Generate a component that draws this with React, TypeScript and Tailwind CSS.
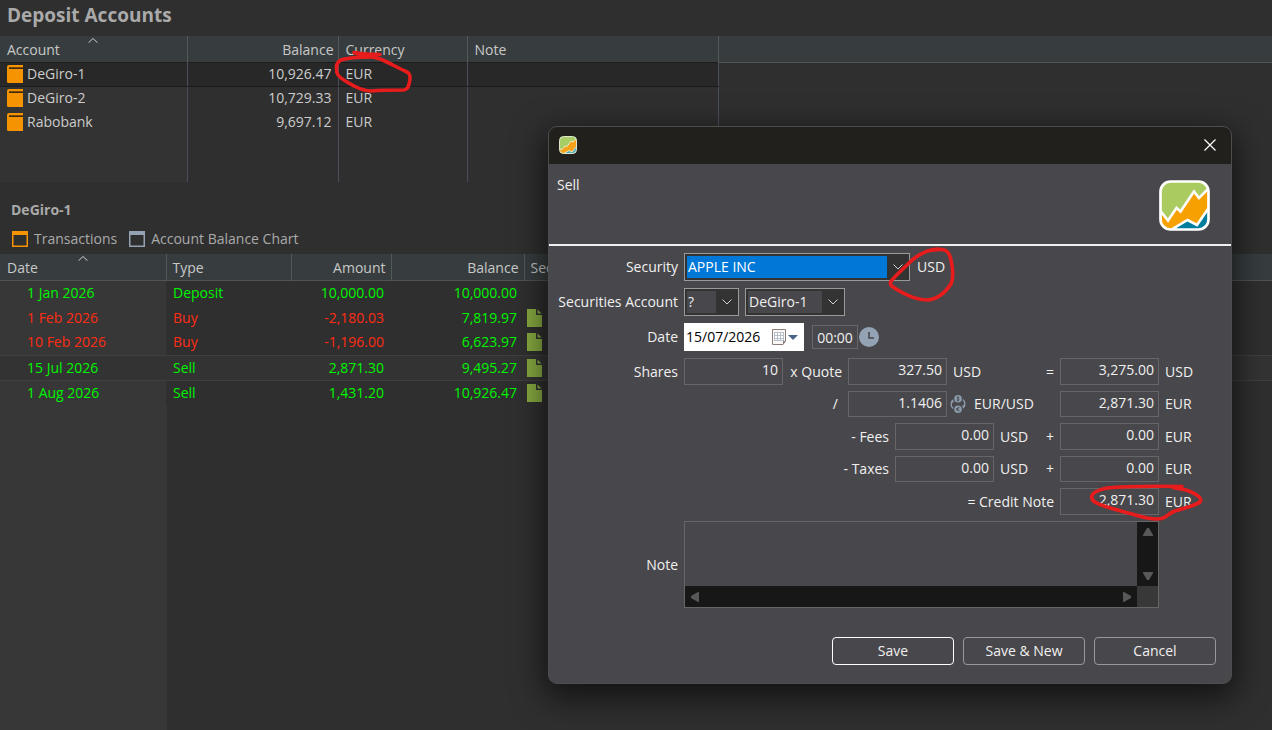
import { useState, type ReactNode } from 'react'

interface Account {
  name: string
  balance: string
  currency: string
}

interface Transaction {
  date: string
  type: string
  amount: string
  balance: string
  negative?: boolean
  hasSecurity?: boolean
}

const accounts: Account[] = [
  { name: 'DeGiro-1', balance: '10,926.47', currency: 'EUR' },
  { name: 'DeGiro-2', balance: '10,729.33', currency: 'EUR' },
  { name: 'Rabobank', balance: '9,697.12', currency: 'EUR' },
]

const transactions: Transaction[] = [
  { date: '1 Jan 2026', type: 'Deposit', amount: '10,000.00', balance: '10,000.00' },
  { date: '1 Feb 2026', type: 'Buy', amount: '-2,180.03', balance: '7,819.97', negative: true, hasSecurity: true },
  { date: '10 Feb 2026', type: 'Buy', amount: '-1,196.00', balance: '6,623.97', negative: true, hasSecurity: true },
  { date: '15 Jul 2026', type: 'Sell', amount: '2,871.30', balance: '9,495.27', hasSecurity: true },
  { date: '1 Aug 2026', type: 'Sell', amount: '1,431.20', balance: '10,926.47', hasSecurity: true },
]

function BookIcon() {
  return (
    <svg className="h-[18px] w-4 shrink-0" viewBox="0 0 16 18" aria-hidden="true">
      <path d="M2 0H16V18H1.5Q0 18 0 16.5V2Q0 0 2 0Z" fill="#f59300" />
      <path d="M2 2H16V4H2Z" fill="#7a4a00" />
      <path d="M2 3H16V4H2Z" fill="#3c2c14" />
    </svg>
  )
}

function DocumentIcon() {
  return (
    <svg className="h-[18px] w-[15px]" viewBox="0 0 15 18" aria-hidden="true">
      <path d="M0 0H9V6H15V18H0Z" fill="#86ab40" />
      <path d="M10.500 0.500L14.500 4.500H10.500Z" fill="#86ab40" />
    </svg>
  )
}

function ViewIcon({ color }: { color: string }) {
  return (
    <svg className="h-4 w-4" viewBox="0 0 16 16" aria-hidden="true">
      <rect x="0.750" y="0.750" width="14.500" height="14.500" fill="none" stroke={color} strokeWidth="1.500" />
      <rect x="0" y="0" width="16" height="4" fill={color} />
    </svg>
  )
}

function SortArrow() {
  return (
    <svg className="absolute top-0.5 left-1/2 h-[5px] w-[10px] -translate-x-1/2" viewBox="0 0 10 5" fill="none" aria-hidden="true">
      <path d="M0.500 4.700L5 0.500L9.500 4.700" stroke="#d0d0d0" />
    </svg>
  )
}

function Logo({ className }: { className: string }) {
  return (
    <svg className={className} viewBox="0 0 51 51" aria-hidden="true">
      <defs>
        <clipPath id="logo-clip">
          <rect x="1.500" y="1.500" width="48" height="48" rx="10" />
        </clipPath>
      </defs>
      <g clipPath="url(#logo-clip)">
        <rect width="51" height="51" fill="#aacb60" />
        <path d="M0 30L9 41L17.500 28.500L21.500 32L35 12L40 18L51 6V51H0Z" fill="#f7a100" />
        <path d="M11 51L28.500 40L38 45L51 26V51Z" fill="#007d9c" />
        <path d="M0 29L9 40.500L17.500 28L21.500 31.500L35 11.500L40 18L51 7" fill="none" stroke="#fff" strokeWidth="2.600" />
        <path d="M10 51L28.500 40L38 45L51 26" fill="none" stroke="#fff" strokeWidth="2.600" />
      </g>
      <rect x="1.500" y="1.500" width="48" height="48" rx="10" fill="none" stroke="#fff" strokeWidth="2.700" />
    </svg>
  )
}

// The logo at title bar size, with thinner and softer lines
function SmallLogo() {
  return (
    <svg className="h-[18px] w-[18px]" viewBox="0 0 18 18" aria-hidden="true">
      <defs>
        <clipPath id="small-logo-clip">
          <rect x="0.500" y="0.500" width="17" height="17" rx="4" />
        </clipPath>
      </defs>
      <g clipPath="url(#small-logo-clip)">
        <rect width="18" height="18" fill="#a9cd66" />
        <path d="M0 13L3 14L6 10L8 11L12 5L14 6L18 2V18H0Z" fill="#f7a21a" />
        <path d="M4 18L10 14.500L13 16L18 9V18Z" fill="#4fa9ba" />
        <path d="M0 12.500L3 13.500L6 10L8 10.500L12 5L14 6L18 2M4 18L10 14.500L13 16L18 10" fill="none" stroke="#f1ecc9" strokeWidth="0.900" />
      </g>
      <rect x="0.500" y="0.500" width="17" height="17" rx="4" fill="none" stroke="#dfe5cf" />
    </svg>
  )
}

function CalendarIcon() {
  return (
    <svg className="h-4 w-[14px]" viewBox="0 0 14 16" aria-hidden="true">
      <path d="M0.500 0.500H13.500V12L11 15.500H0.500Z" fill="#fbf8f6" stroke="#8a7c7c" />
      <path d="M2 3H12V12H2Z" fill="#b7bfca" />
      <path d="M3 4h2v2H3zM6 4h2v2H6zM9 4h2v2H9zM3 7h2v2H3zM6 7h2v2H6zM9 7h2v2H9zM3 10h2v1H3zM6 10h2v1H6zM9 10h2v1H9z" fill="#fff" />
      <path d="M11 15.500V12H13.500Z" fill="#8a7c7c" />
    </svg>
  )
}

function ClockIcon() {
  return (
    <svg className="h-5 w-5" viewBox="0 0 20 20" aria-hidden="true">
      <circle cx="10" cy="10" r="10" fill="#93a3b3" />
      <path d="M10 5V11H15" fill="none" stroke="#48474b" strokeWidth="1.600" />
    </svg>
  )
}

function ExchangeIcon() {
  return (
    <svg className="h-[18px] w-4" viewBox="0 0 16 18" fill="none" aria-hidden="true">
      <circle cx="8" cy="3.800" r="3.800" fill="#8c9cac" />
      <circle cx="8" cy="14.200" r="3.800" fill="#8c9cac" />
      <path d="M9.300 2.500C8.500 1.800 6.900 2.100 7 3.100C7.100 4 9.200 3.700 9.200 4.700C9.100 5.700 7.400 5.700 6.700 5.100M8 1.200V6.400" stroke="#48474b" strokeWidth="0.800" />
      <path d="M9.600 12.700C8.200 11.800 6.900 12.700 6.900 14.200C6.900 15.700 8.200 16.600 9.600 15.700M6.100 13.700H8.800M6.100 14.700H8.800" stroke="#48474b" strokeWidth="0.800" />
      <path d="M3.200 13.500C1.200 12 0.900 9 2 6.500M12.800 4.500C14.800 6 15.100 9 14 11.500" stroke="#8c9cac" strokeWidth="1.400" />
      <path d="M0.200 7.300L2.800 4.300L4 7.600Z" fill="#8c9cac" />
      <path d="M15.800 10.700L13.200 13.700L12 10.400Z" fill="#8c9cac" />
    </svg>
  )
}

function Triangle({ className }: { className: string }) {
  return (
    <svg className={className} viewBox="0 0 10 8" aria-hidden="true">
      <path d="M4 0H6L10 7V8H0V7Z" fill="#585858" />
    </svg>
  )
}

interface ComboProps {
  id: string
  label: string
  options: string[]
  className: string
  selected?: boolean
}

function Combo({ id, label, options, className, selected }: ComboProps) {
  return (
    <div className={`flex h-7 border border-[#9a9a9a] bg-[#333333] p-px ${className}`}>
      <select
        id={id}
        aria-label={label}
        className={`min-w-0 flex-1 appearance-none border border-[#333333] pl-px outline-none ${selected ? 'bg-[#0078d7] text-white' : 'bg-[#48474b]'}`}
      >
        {options.map((o) => (
          <option key={o}>{o}</option>
        ))}
      </select>
      <span className="pointer-events-none flex w-5 items-center justify-center">
        <svg className="h-[6px] w-[10px]" viewBox="0 0 10 6" fill="none" aria-hidden="true">
          <path d="M0.500 0.500L5 5L9.500 0.500" stroke="#d0d0d0" />
        </svg>
      </span>
    </div>
  )
}

function NumberField({ id, label, initial }: { id: string; label: string; initial: string }) {
  const [value, setValue] = useState(initial)
  return (
    <input
      id={id}
      aria-label={label}
      value={value}
      onChange={(e) => setValue(e.target.value)}
      className="h-full w-[99px] shrink-0 border border-[#666668] bg-transparent pr-1 pb-1 text-right outline-none"
    />
  )
}

interface CalcRowProps {
  label?: ReactNode
  operator: ReactNode
  resultLabel: string
  result: string
  currency: string
  children?: ReactNode
}

function CalcRow({ label, operator, resultLabel, result, currency, children }: CalcRowProps) {
  return (
    <div className="flex items-center gap-1.5">
      <div className="w-[121px] shrink-0 text-right">{label}</div>
      <div className="flex h-full w-[370px] shrink-0 items-center gap-1.5">
        {children}
        <span className="ml-auto">{operator}</span>
      </div>
      <NumberField id={resultLabel} label={resultLabel} initial={result} />
      <span>{currency}</span>
    </div>
  )
}

function AccountsTable() {
  return (
    <table className="w-full table-fixed border-collapse text-[#cccccc]">
      <colgroup>
        <col className="w-[187px]" />
        <col className="w-[151px]" />
        <col className="w-[129px]" />
        <col className="w-[251px]" />
        <col />
      </colgroup>
      <thead>
        <tr className="h-[26px] border-b border-[#4f5455] bg-[#373d3f] text-left text-[#c8c8c8]">
          <th className="relative border-r border-[#535859] pt-0.5 pl-[7px] font-normal">
            Account
            <SortArrow />
          </th>
          <th className="border-r border-[#535859] pt-0.5 pr-1 text-right font-normal">Balance</th>
          <th className="border-r border-[#535859] pt-0.5 pl-[7px] font-normal">Currency</th>
          <th className="border-r border-[#535859] pt-0.5 pl-[7px] font-normal">Note</th>
          <th></th>
        </tr>
      </thead>
      <tbody>
        {accounts.map((account, i) => {
          const cell = i === 0 ? 'border-y border-y-[#1c1c1c] bg-[#282828]' : ''
          return (
            <tr key={account.name} className="h-6">
              <td className={`border-r border-r-[#4a505b] pl-[7px] ${i === 0 ? cell : 'bg-[#333333]'}`}>
                <div className="flex items-center gap-1">
                  <BookIcon />
                  {account.name}
                </div>
              </td>
              <td className={`border-r border-r-[#4a505b] pr-1.5 text-right ${cell}`}>{account.balance}</td>
              <td className={`border-r border-r-[#4a505b] pl-[7px] ${cell}`}>{account.currency}</td>
              <td className={`border-r border-r-[#4a505b] ${cell}`}></td>
              <td></td>
            </tr>
          )
        })}
        <tr className="h-12">
          <td className="border-r border-[#4a505b] bg-[#333333]"></td>
          <td className="border-r border-[#4a505b]"></td>
          <td className="border-r border-[#4a505b]"></td>
          <td className="border-r border-[#4a505b]"></td>
          <td></td>
        </tr>
      </tbody>
    </table>
  )
}

function TransactionsTable() {
  return (
    <table className="w-full table-fixed border-collapse">
      <colgroup>
        <col className="w-[166px]" />
        <col className="w-[125px]" />
        <col className="w-[100px]" />
        <col className="w-[133px]" />
        <col />
      </colgroup>
      <thead>
        <tr className="h-[26px] border-b border-[#4f5455] bg-[#373d3f] text-left text-[#c8c8c8]">
          <th className="relative border-r border-[#535859] pt-0.5 pl-[7px] font-normal">
            Date
            <SortArrow />
          </th>
          <th className="border-r border-[#535859] pt-0.5 pl-1.5 font-normal">Type</th>
          <th className="border-r border-[#535859] pt-0.5 pr-[5px] text-right font-normal">Amount</th>
          <th className="border-r border-[#535859] pt-0.5 pr-[5px] text-right font-normal">Balance</th>
          <th className="pt-0.5 pl-1.5 font-normal">Security</th>
        </tr>
      </thead>
      <tbody>
        {transactions.map((t, i) => {
          const color = t.negative ? 'text-[#ff2c14]' : 'text-[#00f500]'
          return (
            <tr key={t.date} className={i === 3 ? 'h-[25px] border-y border-[#3f3f3f] bg-[#333333]' : 'h-[25px]'}>
              <td className={`pl-[27px] ${color} ${i === 3 ? '' : 'bg-[#373737]'}`}>{t.date}</td>
              <td className={`pl-[7px] ${color}`}>{t.type}</td>
              <td className={`pr-[7px] text-right ${color}`}>{t.amount}</td>
              <td className="pr-[7px] text-right text-[#00f500]">{t.balance}</td>
              <td className="pl-[3px]">{t.hasSecurity && <DocumentIcon />}</td>
            </tr>
          )
        })}
      </tbody>
    </table>
  )
}

function SellDialog() {
  const [date, setDate] = useState('15/07/2026')
  const [time, setTime] = useState('00:00')
  const [note, setNote] = useState('')

  const buttonClass = 'h-7 w-[122px] rounded border border-[#98989a]'

  return (
    <div
      role="dialog"
      aria-label="Sell"
      className="absolute top-[126px] left-[548px] w-[684px] overflow-hidden rounded-[9px] border border-[#4d4d4d] bg-[#48474b] text-[#f0f0f0] shadow-[0_10px_32px_4px_rgba(0,0,0,0.6)]"
    >
      {/* Title bar */}
      <div className="flex h-[37px] items-center justify-between bg-[#21201c] pr-[15px] pb-0.5 pl-2.5">
        <SmallLogo />
        <button aria-label="Close">
          <svg className="h-3 w-3" viewBox="0 0 12 12" fill="none" aria-hidden="true">
            <path d="M0.500 0.500L11.500 11.500M11.500 0.500L0.500 11.500" stroke="#fff" strokeWidth="1.200" />
          </svg>
        </button>
      </div>

      {/* Header */}
      <div className="flex h-[82px] justify-between border-b-2 border-[#f0f0f0] pr-[21px] pl-2">
        <h2 className="pt-[11px]">Sell</h2>
        <Logo className="mt-4 h-[51px] w-[51px]" />
      </div>

      <form className="px-2 pt-[7px] pb-[18px]" onSubmit={(e) => e.preventDefault()}>
        <div className="flex flex-col gap-[7px]">
          <div className="flex items-center gap-1.5">
            <label htmlFor="security" className="w-[121px] text-right">Security</label>
            <Combo id="security" label="Security" options={['APPLE INC']} className="w-[226px]" selected />
            <span className="pl-px">USD</span>
          </div>
          <div className="flex items-center gap-1.5">
            <label htmlFor="portfolio" className="w-[121px] text-right whitespace-nowrap">Securities Account</label>
            <Combo id="portfolio" label="Securities Account" options={['?']} className="w-[55px]" />
            <Combo id="account" label="Deposit Account" options={['DeGiro-1']} className="w-[100px]" />
          </div>
          <div className="flex items-center gap-1.5">
            <label htmlFor="date" className="w-[121px] text-right">Date</label>
            <div className="flex h-7 w-[120px] items-center bg-white text-black">
              <input
                id="date"
                value={date}
                onChange={(e) => setDate(e.target.value)}
                className="w-[88px] bg-transparent pl-0.5 outline-none"
              />
              <button type="button" aria-label="Open calendar" className="flex items-center gap-0.5">
                <CalendarIcon />
                <svg className="h-[5px] w-[10px]" viewBox="0 0 10 5" aria-hidden="true">
                  <path d="M0 0H10L5 5Z" fill="#4a6487" />
                </svg>
              </button>
            </div>
            <div className="flex items-center gap-px pl-0.5">
              <input
                aria-label="Time"
                value={time}
                onChange={(e) => setTime(e.target.value)}
                className="h-6 w-[46px] border border-[#666668] bg-transparent text-center outline-none"
              />
              <button type="button" aria-label="Set time">
                <ClockIcon />
              </button>
            </div>
          </div>
        </div>

        {/* Calculation */}
        <div className="mt-[7px] grid grid-rows-[27px_26px_27px_26px_27px] gap-y-1.5">
          <CalcRow label={<label htmlFor="shares">Shares</label>} operator="=" resultLabel="Gross value" result="3,275.00" currency="USD">
            <NumberField id="shares" label="Shares" initial="10" />
            <label htmlFor="quote" className="w-[53px] text-right whitespace-nowrap">x Quote</label>
            <NumberField id="quote" label="Quote" initial="327.50" />
            <span>USD</span>
          </CalcRow>
          <CalcRow operator="" resultLabel="Converted value" result="2,871.30" currency="EUR">
            <label htmlFor="rate" className="w-[158px] pr-1 text-right">/</label>
            <NumberField id="rate" label="Exchange rate" initial="1.1406" />
            <div className="flex items-center gap-2">
              <button type="button" aria-label="Invert exchange rate" className="-ml-1 pl-px">
                <ExchangeIcon />
              </button>
              <span>EUR/USD</span>
            </div>
          </CalcRow>
          <CalcRow operator="+" resultLabel="Fees in account currency" result="0.00" currency="EUR">
            <label htmlFor="fees" className="w-[205px] text-right">- Fees</label>
            <NumberField id="fees" label="Fees" initial="0.00" />
            <span>USD</span>
          </CalcRow>
          <CalcRow operator="+" resultLabel="Taxes in account currency" result="0.00" currency="EUR">
            <label htmlFor="taxes" className="w-[205px] text-right">- Taxes</label>
            <NumberField id="taxes" label="Taxes" initial="0.00" />
            <span>USD</span>
          </CalcRow>
          <CalcRow operator="= Credit Note" resultLabel="Credit Note" result="2,871.30" currency="EUR" />
        </div>

        <div className="mt-1.5 flex items-center gap-1.5">
          <label htmlFor="note" className="w-[121px] text-right">Note</label>
          <div className="grid w-[475px] grid-cols-[1fr_21px] border border-[#666668]">
            <textarea
              id="note"
              value={note}
              onChange={(e) => setNote(e.target.value)}
              className="h-16 resize-none bg-transparent px-1 outline-none"
            />
            <div className="flex flex-col items-center justify-between bg-[#171717] py-1.5">
              <Triangle className="h-2 w-2.5" />
              <Triangle className="h-2 w-2.5 rotate-180" />
            </div>
            <div className="flex h-[21px] items-center justify-between bg-[#171717] px-[5px]">
              <Triangle className="h-2 w-2.5 -rotate-90" />
              <Triangle className="h-2 w-2.5 rotate-90" />
            </div>
            <div className="bg-[#383838]"></div>
          </div>
        </div>

        <div className="mt-[29px] flex justify-end gap-[9px] pr-[7px]">
          <button type="submit" className="h-7 w-[122px] rounded border border-white">Save</button>
          <button type="button" className={buttonClass}>Save &amp; New</button>
          <button type="button" className={buttonClass}>Cancel</button>
        </div>
      </form>
    </div>
  )
}

// Red pen marks drawn over the window
function PenMarks() {
  return (
    <svg
      className="pointer-events-none absolute top-0 left-0 h-px w-px overflow-visible"
      fill="none"
      stroke="#e81c1c"
      strokeWidth="3.600"
      strokeLinecap="round"
      strokeLinejoin="round"
      aria-hidden="true"
    >
      <path d="M380 54.500C372 54.500 364 54.500 354 52.500C361 55 371 56 380 59C388 62 396 67 405 71C410 73 410 75 410 79C409 84 409 89 404 90C394 90 382 90 371 91C364 91 360 89 354 86C348 82 339 79 337 73C336 68 336 62 341 60C350 57 362 57 372 57" />
      <path d="M937 249C928 250 919 253 909 263C901 271 894 277 890.500 282C890 286 892 286 896 289C907 296 918 300 928 300C938 299 945 293 951 284C954 277 953 269 951 260C950 255 948 250 942 249.500C938 249 932 250 927 251" />
      <path d="M1182 486.500C1157 486 1127 486 1107 488C1098 490 1092 493 1091.500 497C1092 502 1098 504 1107 507C1120 511 1136 515 1147 518C1153 519 1159 520 1163 518C1168 516 1169 513 1175 511C1184 508 1195 506 1200 502C1203 498 1196 494 1189 491C1183 489 1179 489 1173 487.500" />
    </svg>
  )
}

export default function App() {
  return (
    <main className="relative flex min-h-screen flex-col overflow-hidden bg-[#2f2f2f] font-['Open_Sans','Noto_Sans',sans-serif] text-sm leading-5">
      <h1 className="h-9 pt-[3px] pl-[7px] text-[19px] leading-6 font-bold text-[#aaaaaa]">Deposit Accounts</h1>
      <AccountsTable />

      <div className="flex h-[72px] flex-col justify-between pt-[18px] pb-[5px] pl-[11px] text-[#aaaaaa]">
        <h2 className="font-bold">DeGiro-1</h2>
        <div className="flex gap-3 pl-px">
          <button className="flex items-center gap-1.5">
            <ViewIcon color="#f59300" />
            Transactions
          </button>
          <button className="flex items-center gap-1.5">
            <ViewIcon color="#93a3b3" />
            Account Balance Chart
          </button>
        </div>
      </div>

      <TransactionsTable />
      <div className="w-[167px] flex-1 bg-[#373737]"></div>

      <SellDialog />
      <PenMarks />
    </main>
  )
}
